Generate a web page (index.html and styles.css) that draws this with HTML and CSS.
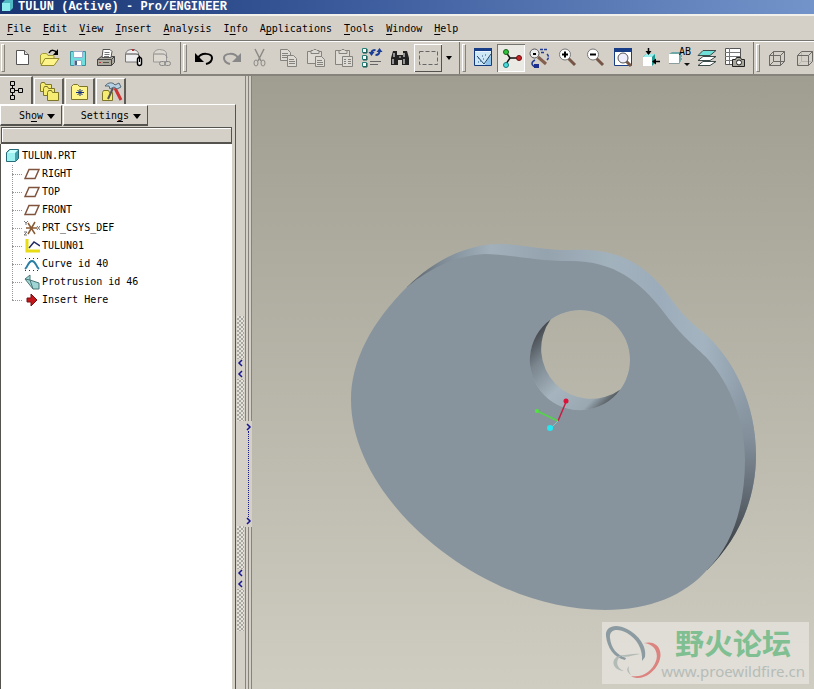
FILE: index.html
```html
<!DOCTYPE html>
<html lang="en">
<head>
    <meta charset="UTF-8">
    <meta name="viewport" content="width=device-width, initial-scale=1.0">
    <title>TULUN (Active) - Pro/ENGINEER</title>
    <link rel="stylesheet" href="styles.css">
</head>
<body>
    <header class="titlebar">
        <svg class="title-icon" viewBox="0 0 12 12"><path d="M1 3l3-3h8v8l-3 3H1z" fill="#4fb9c4"/><path d="M1 3h8v8H1z" fill="#8cecee"/></svg>
        <h1 class="title">TULUN (Active) - Pro/ENGINEER</h1>
    </header>

    <nav class="menubar">
        <button class="menu"><u>F</u>ile</button>
        <button class="menu"><u>E</u>dit</button>
        <button class="menu"><u>V</u>iew</button>
        <button class="menu"><u>I</u>nsert</button>
        <button class="menu"><u>A</u>nalysis</button>
        <button class="menu">I<u>n</u>fo</button>
        <button class="menu">A<u>p</u>plications</button>
        <button class="menu"><u>T</u>ools</button>
        <button class="menu"><u>W</u>indow</button>
        <button class="menu"><u>H</u>elp</button>
    </nav>

    <div class="toolbar">
        <div class="group group-first">
            <button class="tool" aria-label="New"><svg viewBox="0 0 28 28"><path d="M8.500 6.500h8l4 4v10h-12z" fill="#fff" stroke="#555"/><path d="M16.500 6.500v4h4" fill="#ddd" stroke="#555"/></svg></button>
            <button class="tool" aria-label="Open"><svg viewBox="0 0 28 28"><path d="M4.500 20V11l2-1.500h4l1.500 2h6v9z" fill="#f4ee7a" stroke="#a39a35"/><path d="M5 21.500l4-7h14l-5 7z" fill="#fff48a" stroke="#948c2e"/><path d="M13 9c2-4 6-3 8 0" fill="none" stroke="#000" stroke-width="1.500"/><path d="M22 5v6h-5z"/></svg></button>
            <button class="tool" aria-label="Save"><svg viewBox="0 0 28 28"><path d="M6.500 7.500h15v14h-15z" fill="#6fdede" stroke="#3e8f98"/><path d="M9.500 7.500h9v6h-9zM10.500 16.500h7v5h-7z" fill="#fff" stroke="#9ac"/><path d="M11 17h2v4h-2z" fill="#467"/></svg></button>
            <button class="tool" aria-label="Print"><svg viewBox="0 0 28 28"><path d="M5.500 15.500l4-3h13v6l-3 3h-14z" fill="#aaa79d" stroke="#444"/><path d="M5.500 15.500h14l3-3M19.500 15.500v6" fill="none" stroke="#444"/><path d="M10 13.500l1-8h7l2 2-1 6z" fill="#fff" stroke="#555"/><path d="M12.500 8.500h5M12.500 10.500h5M12 12.500h5" stroke="#777"/><path d="M7 18h2v1H7z" fill="#c33"/><path d="M11 18h6v1h-6z" fill="#554"/></svg></button>
            <button class="tool" aria-label="Send with attachment"><svg viewBox="0 0 28 28"><path d="M5.500 9.500c1-3 4-4 6-4l3 .5c2 0 4 2 4 4v8h-13z" fill="#eee" stroke="#777"/><path d="M6 10h10c3 0 4 2 4 4M11.500 5.500h3" fill="none" stroke="#444"/><path d="M12 5h2v2h-2z" fill="#b33"/><rect x="17.500" y="13.500" width="4" height="8" rx="2" fill="#fff" stroke="#000" stroke-width="1.500"/><path d="M19.500 12v6" stroke="#000"/></svg></button>
            <button class="tool" aria-label="Send link"><svg viewBox="0 0 28 28"><path d="M5.500 9.500c1-3 4-4 6-4l3 .5c2 0 4 2 4 4v8h-13z" fill="#ddd9d0" stroke="#999"/><path d="M6 10h9c2 0 4 2 4 4" fill="none" stroke="#888"/><rect x="11.500" y="17.500" width="6" height="4" rx="2" fill="#d4d0c8" stroke="#888"/><rect x="16.500" y="17.500" width="6" height="4" rx="2" fill="none" stroke="#888"/></svg></button>
        </div>
        <div class="group">
            <button class="tool" aria-label="Undo"><svg viewBox="0 0 28 28"><path d="M8 14c3-6 14-5 14 0 0 3-2 5-6 6" fill="none" stroke="#000" stroke-width="2"/><path d="M5 9v9h9z"/></svg></button>
            <button class="tool" aria-label="Redo"><svg viewBox="0 0 28 28"><path d="M20 14c-3-6-14-5-14 0 0 3 2 5 6 6" fill="none" stroke="#888" stroke-width="2"/><path d="M23 9v9h-9z" fill="#888"/></svg></button>
            <button class="tool" aria-label="Cut"><svg viewBox="0 0 28 28"><g fill="none" stroke="#8c8a85"><path d="M9 5l6 12M18 5l-6 12" stroke-width="1.500"/><ellipse cx="10" cy="19" rx="2" ry="3"/><ellipse cx="17" cy="19" rx="2" ry="3"/></g></svg></button>
            <button class="tool" aria-label="Copy"><svg viewBox="0 0 28 28"><g fill="#dedbd4" stroke="#85837e"><path d="M6.500 5.500h7l3 3v8h-10z"/><path d="M8 9.500h6M8 11.500h6M8 13.500h6"/><path d="M13.500 11.500h6l3 3v8h-9z"/><path d="M15 15.500h5M15 17.500h6M15 19.500h6"/></g></svg></button>
            <button class="tool" aria-label="Paste"><svg viewBox="0 0 28 28"><g fill="#dedbd4" stroke="#85837e"><path d="M5.500 7.500h14v12h-14z"/><path d="M9 9.500v-3h2l1-1h2l1 1h2v3z"/><path d="M13.500 12.500h6l3 3v7h-9z"/><path d="M15 16.500h5M15 18.500h6M15 20.500h6"/></g></svg></button>
            <button class="tool" aria-label="Paste Special"><svg viewBox="0 0 28 28"><g fill="#dedbd4" stroke="#85837e"><path d="M5.500 6.500h14v14h-14z"/><path d="M9 9.500v-3h2l1-1h2l1 1h2v3z"/><path d="M12.500 12.500h10v10h-10z"/><path d="M14 15.500h2M18 15.500h3M14 17.500h2M18 17.500h3M14 19.500h2M18 19.500h3"/></g></svg></button>
            <button class="tool" aria-label="Regenerate"><svg viewBox="0 0 28 28"><g fill="#fff" stroke="#277f77"><path d="M4.500 4.500h4v4h-4zM4.500 11.500h4v4h-4zM4.500 18.500h4v4h-4z"/></g><path d="M9 5v4H5M9 12v4H5M9 19v4H5" fill="none" stroke="#154e4a"/><path d="M13.500 9c0-2 1-3 4-3M21.500 7c0 3-1 4-4 4" fill="none" stroke="#1c3d94" stroke-width="2"/><path d="M10.500 8h6l-3 4zM18.500 8h6l-3-4z" fill="#1c3d94"/><path d="M12 17.500h11M12 20.500h8" stroke="#666"/></svg></button>
            <button class="tool" aria-label="Find"><svg viewBox="0 0 28 28"><path d="M7 7h4v4h6V7h4l2 7v7h-7v-5h-4v5H5v-7z" fill="#222"/><path d="M8 9v4M7 15v5M18 9v4M18 15v5" stroke="#bbb" stroke-width="1.500"/><path d="M13 12h2v2h-2z" fill="#777"/></svg></button>
            <button class="tool raised" aria-label="Selection box"><svg viewBox="0 0 28 28"><path d="M5.500 7.500h18v13h-18z" fill="none" stroke="#666" stroke-dasharray="4 2"/></svg></button>
            <button class="drop" aria-label="Selection options"><i class="arrow"></i></button>
        </div>
        <div class="group">
            <button class="tool" aria-label="Repaint"><svg viewBox="0 0 28 28"><path d="M5.500 5.500h17v16h-17z" fill="#eaf6ff" stroke="#123a80"/><path d="M5 4h18v3H5z" fill="#173e87"/><path d="M6 8h16v6c-3 1-5 4-6 7H6z" fill="#cfe8f8"/><path d="M16 21c1-4 3-7 6-9v9z" fill="#8fc3ea"/><path d="M8 12l7 8 7-10" fill="none" stroke="#246"/><path d="M9 14h1M11 17h1M13 12h1M16 11h1M9 18h1M14 15h1" stroke="#258"/></svg></button>
            <button class="tool pressed" aria-label="Spin center"><svg viewBox="0 0 28 28"><path d="M9 8l4 6h8M13 14l-4 6" fill="none" stroke="#111" stroke-width="1.500"/><circle cx="9" cy="8" r="2.500" fill="#2fc43a" stroke="#17601c"/><circle cx="22" cy="14" r="2.500" fill="#c22" stroke="#611"/><circle cx="9" cy="21" r="2.500" fill="#4fdada" stroke="#177"/></svg></button>
            <button class="tool" aria-label="Orient mode"><svg viewBox="0 0 28 28"><path d="M13 13l8 7" stroke="#85604e" stroke-width="3"/><circle cx="9.500" cy="9.500" r="4.500" fill="#eee" stroke="#555"/><path d="M8 9h3v2H8z"/><path d="M15 5.500h7M16 8.500h3M22 10c2 2 2 4 0 6" fill="none" stroke="#223a91" stroke-width="1.500" stroke-dasharray="3 1"/><path d="M10 16c-4 2-4 5 0 7" fill="none" stroke="#223a91" stroke-width="1.500"/><path d="M9 20h5v4H9z" fill="#1c2f8f"/></svg></button>
            <button class="tool" aria-label="Zoom In"><svg viewBox="0 0 28 28"><path d="M15 14l7 7" stroke="#765546" stroke-width="3"/><circle cx="12" cy="10.500" r="5.500" fill="#fff" stroke="#777"/><path d="M9 10.500h6M12 7.500v6" stroke="#000" stroke-width="2"/></svg></button>
            <button class="tool" aria-label="Zoom Out"><svg viewBox="0 0 28 28"><path d="M15 14l7 7" stroke="#765546" stroke-width="3"/><circle cx="12" cy="10.500" r="5.500" fill="#fff" stroke="#777"/><path d="M9 10.500h6" stroke="#000" stroke-width="2"/></svg></button>
            <button class="tool" aria-label="Refit"><svg viewBox="0 0 28 28"><path d="M5.500 5.500h17v16h-17z" fill="#fff" stroke="#173e87"/><path d="M5 4h18v4H5z" fill="#173e87"/><path d="M17 17l5 5" stroke="#765546" stroke-width="3"/><circle cx="14" cy="14" r="5" fill="#eef" stroke="#555"/></svg></button>
            <button class="tool" aria-label="Reorient"><svg viewBox="0 0 28 28"><path d="M6 13l3-3h9v9l-3 3H6z" fill="#20978e"/><path d="M6 13l3-3h9l-3 3z" fill="#9ee"/><path d="M6 13h9v9H6z" fill="#fff"/><path d="M11.500 4v6M17 17.500h6" stroke="#000" stroke-width="1.500"/><path d="M8.500 7h6l-3 4zM19 14.500v6l-4-3z"/></svg></button>
            <button class="tool" aria-label="Saved views"><svg viewBox="0 0 28 28"><path d="M4 10l3-2h9v9l-2 3H4z" fill="#70a8a8"/><path d="M4 10h10v9H4z" fill="#fff"/><path d="M4.500 19.500h10M16.500 8v9" stroke="#999" stroke-dasharray="2 1"/><path d="M19 19h6l-3 3z" fill="#111"/><g class="tiny-letters"><text x="14" y="11">AB</text></g></svg></button>
            <button class="tool" aria-label="Layers"><svg viewBox="0 0 28 28"><g stroke="#3d4a4a"><path d="M5 21.500l5-4h13l-6 4z" fill="#fff"/><path d="M5 16.500l5-4h13l-6 4z" fill="#fff"/><path d="M5 11.500l5-5h13l-6 5z" fill="#6fe0d8"/></g></svg></button>
            <button class="tool" aria-label="View manager"><svg viewBox="0 0 28 28"><path d="M4.500 4.500h15v16h-15z" fill="#fff" stroke="#555"/><path d="M4 8.500h15M4 12.500h15M4 16.500h15M8.500 4v16" stroke="#777"/><path d="M11.500 15.500h3l1-2h4l1 2h3v7h-12z" fill="#aaa79c" stroke="#222"/><circle cx="18" cy="18.500" r="2.500" fill="#fff" stroke="#222"/></svg></button>
        </div>
        <div class="group group-last">
            <button class="tool" aria-label="Wireframe"><svg viewBox="0 0 28 28"><path d="M6.500 11.500h11v10h-11zM10.500 7.500h11v10h-11zM6.500 11.500l4-4M17.500 11.500l4-4M17.500 21.500l4-4M6.500 21.500l4-4" fill="none" stroke="#6b6965"/></svg></button>
            <button class="tool" aria-label="Hidden line"><svg viewBox="0 0 28 28"><path d="M10.500 8v9.500h10M6.500 21.500l4-4" fill="none" stroke="#b7b4ad"/><path d="M6.500 11.500h11v10h-11zM6.500 11.500l4-4h11v10l-4 4M17.500 11.500l4-4" fill="none" stroke="#6b6965"/></svg></button>
        </div>
    </div>

    <main class="workspace">
        <aside class="navigator">
            <div class="tabs">
                <button class="tab tab-active" aria-label="Model Tree"><svg viewBox="0 0 24 24"><path d="M6.500 2.500h4v4h-4zM6.500 9.500h4v4h-4zM6.500 16.500h4v4h-4zM14.500 9.500h4v4h-4zM8.500 7v2M8.500 14v2M11 11.500h3" fill="none" stroke="#000"/></svg></button>
                <button class="tab" aria-label="Folder Browser"><svg viewBox="0 0 24 24"><g fill="#f7ec72" stroke="#7d7628"><path d="M3.500 11.500v-7l1-2h3l1 2h6v7z"/><path d="M6.500 15.500v-7l1-2h3l1 2h6v7z"/><path d="M10.500 20.500v-8l1-2h3l1 2h6v8z"/></g></svg></button>
                <button class="tab" aria-label="Favorites"><svg viewBox="0 0 24 24"><path d="M3.500 19.500v-13l2-2h4l2 2h8v13z" fill="#fff48a" stroke="#7d7628"/><path d="M12 9v7M8 12.500h8M9.500 10l5 5M14.500 10l-5 5" stroke="#15307f"/></svg></button>
                <button class="tab" aria-label="Connections"><svg viewBox="0 0 24 24"><path d="M3.500 20.500v-8l1-2h5l1 2h3v8z" fill="#f7ec72" stroke="#7d7628"/><path d="M14 8L9 19" stroke="#555" stroke-width="2"/><path d="M16 8l6 12" stroke="#c33" stroke-width="3"/><path d="M6 6c3-4 8-4 10-1l4-2 2 4-4 2-3-2-4 2-1-3z" fill="#b6d1e3" stroke="#567"/></svg></button>
            </div>
            <div class="panel">
                <div class="actions">
                    <button class="action"><span>Sh<u>o</u>w</span><i class="arrow"></i></button>
                    <button class="action action-wide"><span>Settin<u>g</u>s</span><i class="arrow"></i></button>
                </div>
                <div class="column-head"></div>
                <div class="tree">
                    <div class="root">
                        <svg class="root-icon" viewBox="0 0 14 14"><path d="M1.500 3.500l3-3h9v9l-3 3h-9z" fill="#3fa2ae" stroke="#266b76"/><path d="M2 4h8v8H2z" fill="#9df1f1"/><path d="M2 4l3-3h8l-3 3z" fill="#c9ffff"/></svg>
                        TULUN.PRT
                    </div>
                    <ul class="features">
                        <li><svg viewBox="0 0 16 16"><path d="M5 3.500h10l-4 9H1z" fill="none" stroke="#80533d" stroke-width="1.500"/></svg>RIGHT</li>
                        <li><svg viewBox="0 0 16 16"><path d="M5 3.500h10l-4 9H1z" fill="none" stroke="#80533d" stroke-width="1.500"/></svg>TOP</li>
                        <li><svg viewBox="0 0 16 16"><path d="M5 3.500h10l-4 9H1z" fill="none" stroke="#80533d" stroke-width="1.500"/></svg>FRONT</li>
                        <li><svg viewBox="0 0 16 16"><path d="M2 8h11M4 3l7 11M11 2L4 14" stroke="#8a5c36" stroke-width="1.500"/><path d="M0 1l2 2 2-2M2 3v2M13 6l3 4M16 6l-3 4M0 12h3l-3 3h3" fill="none" stroke="#777"/></svg>PRT_CSYS_DEF</li>
                        <li><svg viewBox="0 0 16 16"><path d="M3 1v12h13" fill="none" stroke="#e8dc16" stroke-width="3"/><path d="M5 10l5-6 6 4" fill="none" stroke="#222a66" stroke-width="1.500"/></svg>TULUN01</li>
                        <li><svg viewBox="0 0 16 16"><path d="M1 13c3-2 3-8 7-8s4 6 7 8" fill="none" stroke="#2b7fa5" stroke-width="2"/><path d="M1 2.500h14M1 14.500h14" stroke="#333" stroke-dasharray="1 3"/></svg>Curve id 40</li>
                        <li><svg viewBox="0 0 16 16"><path d="M1 5l5-4v5l9 3v6H9z" fill="#9fd5d4" stroke="#4b7777"/><path d="M1 5l5 1M6 6l3 9" fill="none" stroke="#4b7777"/></svg>Protrusion id 46</li>
                        <li><svg viewBox="0 0 16 16"><path d="M3 6h4V2l6 6-6 6v-4H3z" fill="#c3181b" stroke="#7b1012"/></svg>Insert Here</li>
                    </ul>
                </div>
            </div>
        </aside>

        <div class="sash">
            <div class="sash-grips">
                <button class="grip" aria-label="Collapse navigator"><svg viewBox="0 0 7 20"><path d="M5 1L2 4l3 3M5 12l-3 3 3 3" fill="none" stroke="#16168f" stroke-width="1.500"/></svg></button>
                <button class="grip" aria-label="Hide navigator"><svg viewBox="0 0 7 20"><path d="M5 1L2 4l3 3M5 12l-3 3 3 3" fill="none" stroke="#16168f" stroke-width="1.500"/></svg></button>
            </div>
            <div class="sash-lines">
                <div class="lines lines-top"></div>
                <button class="expand" aria-label="Expand browser">
                    <svg viewBox="0 0 7 8"><path d="M2 1l3 3-3 3" fill="none" stroke="#16168f" stroke-width="1.500"/></svg>
                    <span class="dots"></span>
                    <svg viewBox="0 0 7 8"><path d="M2 1l3 3-3 3" fill="none" stroke="#16168f" stroke-width="1.500"/></svg>
                </button>
                <div class="lines lines-bottom"></div>
            </div>
        </div>

        <section class="canvas">
            <svg class="model" viewBox="252 76 562 613" preserveAspectRatio="xMidYMid meet" role="img" aria-label="Cam model">
                <defs>
                    <linearGradient id="rim" gradientUnits="userSpaceOnUse" x1="407" y1="0" x2="756" y2="0">
                        <stop offset="0" stop-color="#565e64"/>
                        <stop offset=".1" stop-color="#7f8c97"/>
                        <stop offset=".24" stop-color="#a1b0bb"/>
                        <stop offset=".4" stop-color="#95a3af"/>
                        <stop offset=".58" stop-color="#a2b2bd"/>
                        <stop offset=".72" stop-color="#9dacba"/>
                        <stop offset=".85" stop-color="#a3b4c0"/>
                        <stop offset="1" stop-color="#8997a3"/>
                    </linearGradient>
                    <linearGradient id="shade" gradientUnits="userSpaceOnUse" x1="0" y1="380" x2="0" y2="570">
                        <stop offset="0" stop-color="#8997a3" stop-opacity="0"/>
                        <stop offset=".3" stop-color="#83909c"/>
                        <stop offset=".6" stop-color="#626b74"/>
                        <stop offset=".85" stop-color="#43484c"/>
                        <stop offset="1" stop-color="#303335"/>
                    </linearGradient>
                    <linearGradient id="bore" gradientUnits="userSpaceOnUse" x1="545" y1="318" x2="621" y2="394">
                        <stop offset="0" stop-color="#3b3f43"/>
                        <stop offset=".25" stop-color="#7b868f"/>
                        <stop offset=".55" stop-color="#a5b4be"/>
                        <stop offset=".85" stop-color="#9aa8b2"/>
                        <stop offset="1" stop-color="#474c50"/>
                    </linearGradient>
                    <clipPath id="edge"><path d="M407 287V200H814V570H707z"/></clipPath>
                    <path id="outline" clip-rule="evenodd" fill-rule="evenodd" d="M351 400C351 360 372 322 407 287C432 262 465 244 500 244C530 245 540 250 570 250C620 247 644 266 664 289C678 309 686 319 703 332C735 360 756 405 756 455C756 500 738 540 707 570C685 595 650 610 605 610C480 610 351 500 351 400ZM530 360a50 50 0 0 0 100 0a50 50 0 0 0-100 0z"/>
                </defs>
                <g clip-path="url(#edge)">
                    <use href="#outline" fill="url(#rim)"/>
                    <use href="#outline" fill="url(#shade)"/>
                </g>
                <path fill="#88949d" fill-rule="evenodd" d="M351 400C351 360 372 322 407 287C432 266 460 255 485 254C515 255 535 261 570 261C615 261 640 282 662 310C680 334 688 340 706 357C732 385 745 425 745 460C745 505 733 545 707 570C685 595 650 610 605 610C480 610 351 500 351 400ZM530 360a50 50 0 0 0 100 0a50 50 0 0 0-100 0z"/>
                <path fill="url(#bore)" d="M550.6 319.600A50 50 0 1 0 620.400 389.400A50 50 0 0 1 550.600 319.600z"/>
                <path d="M558 421l8-19" stroke="#c21f45" stroke-width="1.500"/>
                <path d="M558 421l-21-10" stroke="#52d648" stroke-width="1.500"/>
                <path d="M558 421l-7 7" stroke="#7fc6d6"/>
                <circle cx="566" cy="401" r="2.500" fill="#dc1238"/>
                <circle cx="537" cy="411" r="2" fill="#4fe33c"/>
                <circle cx="550" cy="428" r="3" fill="#23e7f2"/>
            </svg>
            <div class="watermark">
                <svg class="watermark-logo" viewBox="0 0 58 58">
                    <path fill="#8b9ba1" fill-rule="evenodd" d="M3 14C2 4 13 1 24 7c12 6 20 18 18 28l-3 4c1-12-5-22-15-28C15 6 6 7 7 16c1 10 7 17 16 20l-1 2C11 36 4 25 3 14z"/>
                    <path fill="#dc8480" d="M41 21c12-3 20 6 15 19-5 12-19 20-28 14 12 2 21-5 25-15 3-9-2-17-12-18z"/>
                    <path fill="#b3bbb7" d="M37 32c-8-1-15 2-21 1 6 4 14 0 21-1zM18 34c-10 0-11 14 3 15-8-3-9-11-3-15zM26 44c-1 3 0 6 2 9-4-3-5-6-2-9z"/>
                </svg>
                <div class="watermark-text">
                    <strong lang="zh">野火论坛</strong>
                    <span>www.proewildfire.cn</span>
                </div>
            </div>
        </section>
    </main>
</body>
</html>
```
FILE: styles.css
```css
*,
*::before {
    box-sizing: border-box;
}

body {
    display: flex;
    flex-direction: column;
    height: 100vh;
    margin: 0;
    overflow: hidden;
    background: #d4d0c8;
    color: #000;
    font: 10px/18px "DejaVu Sans Mono", "Liberation Mono", monospace;
}

button {
    margin: 0;
    padding: 0;
    border: 0;
    background: none;
    color: inherit;
    font: inherit;
}

svg {
    display: block;
}

u {
    text-underline-offset: 2px;
}

.arrow {
    border: 4px solid transparent;
    border-top: 5px solid #000;
    border-bottom: 0;
}

/* title and menus */
.titlebar {
    display: flex;
    align-items: flex-start;
    flex: none;
    gap: 5px;
    height: 14px;
    padding: 0 1px;
    background: linear-gradient(90deg, #193572, #3d5d9e 45%, #7394ca);
}

.title-icon {
    width: 12px;
    height: 12px;
}

.title {
    margin: 0;
    color: #fff;
    font: bold 12px/14px "Liberation Mono", monospace;
    white-space: nowrap;
}

.menubar {
    display: flex;
    flex: none;
    align-items: center;
    gap: 12px;
    height: 27px;
    padding: 2px 7px 0;
    border-top: 2px solid #f2f0ea;
    border-bottom: 1px solid #77756f;
}

/* toolbar */
.toolbar {
    display: flex;
    flex: none;
    height: 35px;
    border-top: 1px solid #fff;
    border-bottom: 2px solid #85837c;
    overflow: hidden;
}

.group {
    display: flex;
    flex: none;
    align-items: center;
    padding: 0 4px 0 2px;
    border-right: 1px solid #77756f;
}

.group::before {
    content: "";
    width: 4px;
    height: 28px;
    margin-right: 3px;
    border: 1px solid #fff;
    border-right-color: #85837c;
    border-bottom-color: #85837c;
}

.group-first {
    padding-left: 1px;
}

.group-last {
    border-right: 0;
}

.tool {
    width: 28px;
    height: 28px;
}

.tool svg {
    width: 28px;
    height: 28px;
}

.raised {
    box-shadow: inset 1px 1px #fff, inset -1px -1px #55534e;
}

.pressed {
    background: #ebe9e4;
    box-shadow: inset 1px 1px #77756f, inset -1px -1px #fff;
}

.drop {
    display: flex;
    align-items: center;
    justify-content: center;
    width: 13px;
    height: 28px;
}

.drop .arrow {
    border-width: 4px 3px 0;
}

.tiny-letters {
    font-size: 10px;
}

/* navigator */
.workspace {
    display: flex;
    flex: 1;
    min-height: 0;
}

.navigator {
    display: flex;
    flex: none;
    flex-direction: column;
    width: 236px;
}

.tabs {
    display: flex;
    align-items: flex-end;
    flex: none;
    gap: 1px;
    height: 28px;
}

.tab {
    display: flex;
    align-items: center;
    justify-content: center;
    width: 30px;
    height: 26px;
    border: 1px solid #fff;
    border-right: 2px solid #5e5c57;
    border-bottom: 0;
}

.tab svg {
    width: 24px;
    height: 24px;
}

.tab-active {
    width: 33px;
    height: 28px;
    border-left: 0;
}

.panel {
    display: flex;
    flex: 1;
    flex-direction: column;
    min-height: 0;
    padding-right: 3px;
    border-top: 1px solid #fff;
    border-right: 1px solid #55534e;
}

.actions {
    display: flex;
    flex: none;
    gap: 1px;
    margin-bottom: 1px;
}

.action {
    display: flex;
    align-items: center;
    justify-content: flex-end;
    gap: 4px;
    width: 62px;
    height: 21px;
    padding: 2px 6px 0 0;
    border: 1px solid #fff;
    border-right-color: #55534e;
    border-bottom: 2px solid #55534e;
}

.action-wide {
    width: 85px;
}

.column-head {
    flex: none;
    height: 17px;
    margin-left: 1px;
    border: 1px solid #55534e;
    border-bottom-width: 2px;
    box-shadow: inset 1px 1px #fff;
}

.tree {
    flex: 1;
    padding: 3px 0 0 4px;
    border-left: 1px solid #55534e;
    background: #fff;
}

.root {
    display: flex;
    align-items: center;
    gap: 3px;
}

.root-icon {
    width: 14px;
    height: 14px;
}

.features {
    margin: 0 0 0 7px;
    padding: 0;
    background: repeating-linear-gradient(#999 0 1px, #fff 1px 2px) no-repeat 0 0 / 1px calc(100% - 9px);
    list-style: none;
}

.features li {
    display: flex;
    align-items: center;
    gap: 2px;
    height: 18px;
}

.features li::before {
    content: "";
    width: 10px;
    border-top: 1px dotted #999;
}

.features svg {
    width: 16px;
    height: 16px;
}

/* splitter between navigator and canvas */
.sash {
    display: flex;
    flex: none;
    width: 16px;
}

.sash-grips {
    display: flex;
    flex-direction: column;
    gap: 105px;
    width: 9px;
    padding: 240px 1px 0;
}

.grip {
    display: flex;
    align-items: center;
    justify-content: center;
    width: 7px;
    height: 105px;
    background: repeating-conic-gradient(#aaa79f 0 25%, #e4e2dc 0 50%) 0 0 / 4px 4px;
}

.grip svg {
    width: 7px;
    height: 20px;
    background: #d4d0c8;
}

.sash-lines {
    display: flex;
    flex: 1;
    flex-direction: column;
}

.lines {
    border: 1px solid #85837c;
    border-width: 0 1px;
    background: linear-gradient(#85837c, #85837c) no-repeat center / 1px 100%;
}

.lines-top {
    height: 345px;
}

.lines-bottom {
    flex: 1;
}

.expand {
    display: flex;
    flex-direction: column;
    align-items: center;
    justify-content: space-between;
    height: 106px;
    padding: 2px 0;
}

.expand svg {
    width: 7px;
    height: 8px;
}

.dots {
    height: 86px;
    border-left: 1px dotted #16168f;
}

/* graphics area */
.canvas {
    position: relative;
    flex: 1;
    min-width: 0;
    background: linear-gradient(#a09e91, #cfcdc1);
}

.model {
    width: 100%;
    height: 100%;
}

.watermark {
    position: absolute;
    right: 5px;
    bottom: 5px;
    display: flex;
    align-items: center;
    padding: 0 4px 4px 1px;
    background: rgba(235, 232, 228, 0.65);
}

.watermark-logo {
    width: 58px;
    height: 58px;
}

.watermark-text {
    display: flex;
    flex-direction: column;
    align-items: center;
    color: #b5bcb8;
    font: 15px/18px "Noto Sans", sans-serif;
}

.watermark-text strong {
    color: #7fbf91;
    font: bold 29px/40px "Noto Sans CJK SC", sans-serif;
}
```
